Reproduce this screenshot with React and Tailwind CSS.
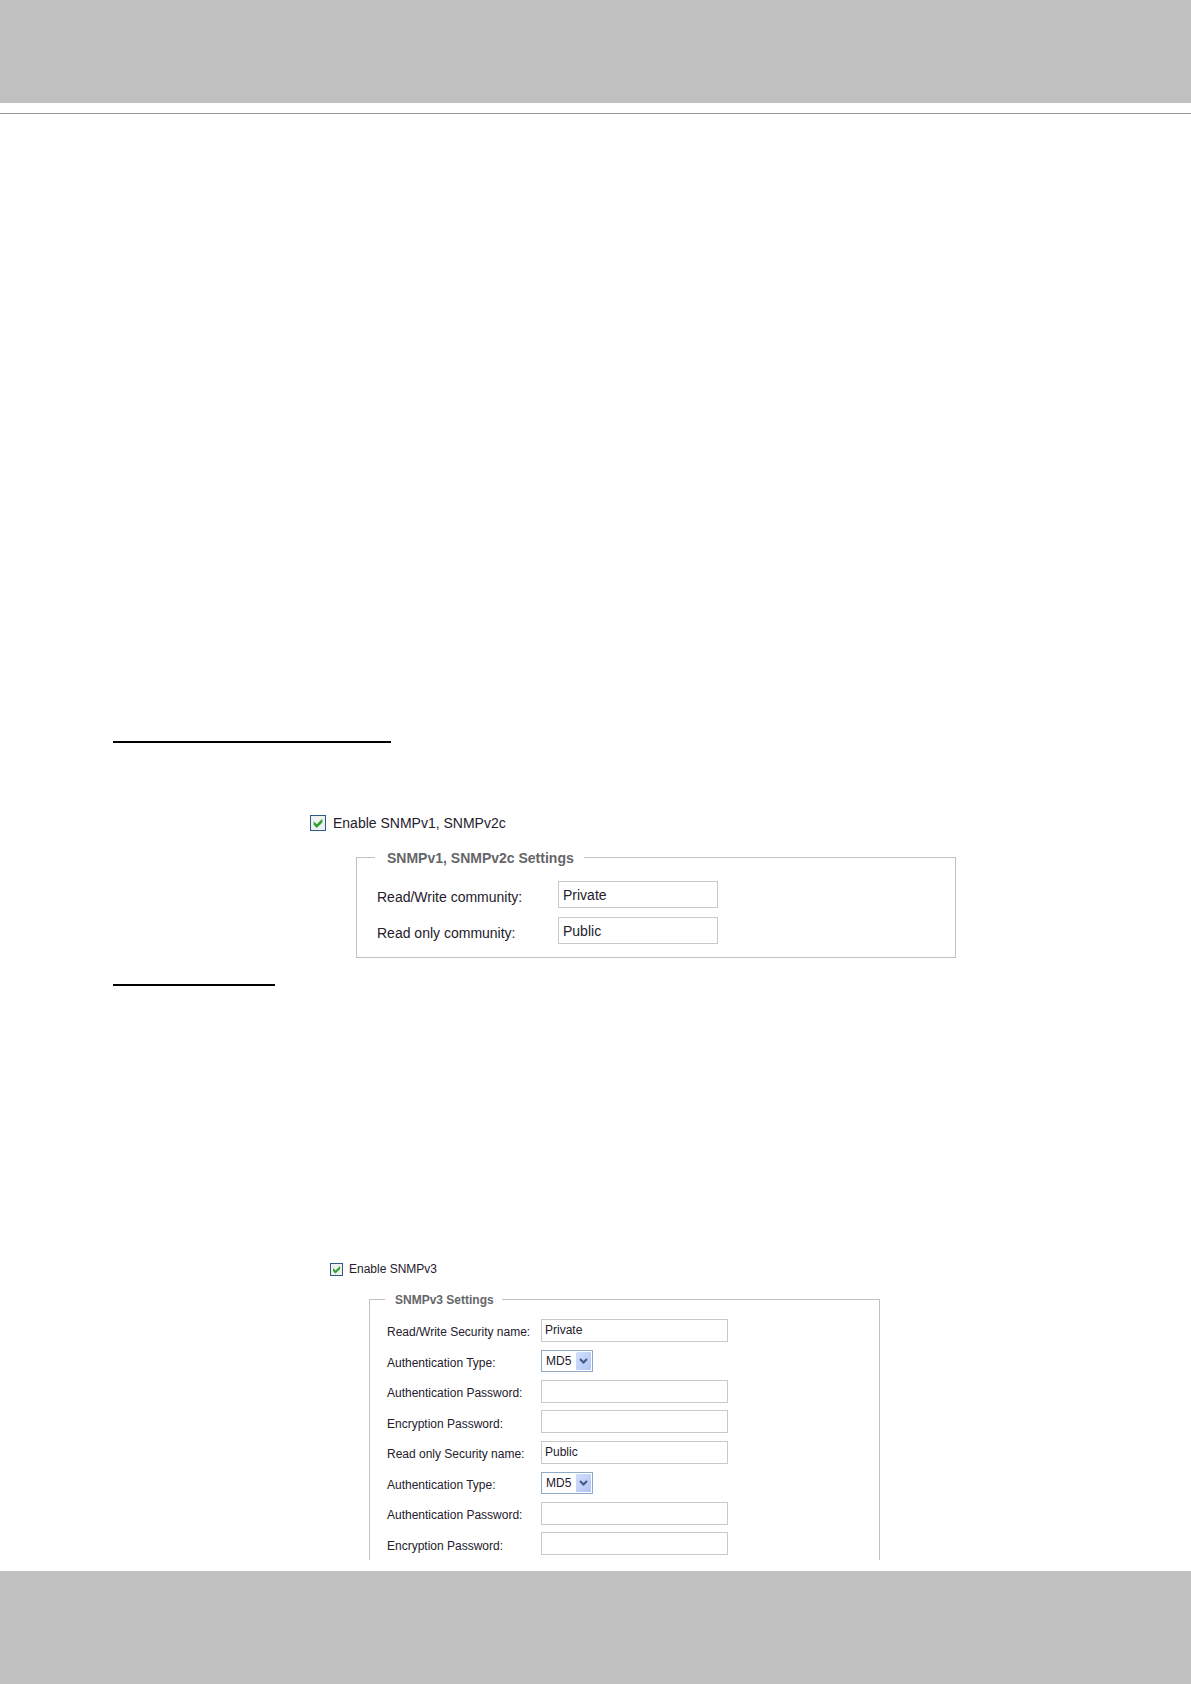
import React from "react";

function CheckBox({ id, className }) {
  return (
    <span className={"relative block shrink-0 " + className}>
      <input
        id={id}
        type="checkbox"
        defaultChecked
        className="peer block h-full w-full appearance-none border border-[#2c5a8c] bg-[#f0f1ee]"
      />
      <svg
        viewBox="0 0 13 13"
        className="pointer-events-none absolute inset-0 hidden h-full w-full peer-checked:block"
        aria-hidden="true"
      >
        <path d="M3 5v3l2.5 2.5L10 6V3L5.5 7.5z" fill="#2da12d" />
      </svg>
    </span>
  );
}

function TypeSelect({ id }) {
  return (
    <span className="relative block h-[22px] w-[52px]">
      <select
        id={id}
        className="block h-full w-full appearance-none border border-[#8fabc6] bg-white pl-1 text-[12px] leading-5 text-[#24202c]"
      >
        <option>MD5</option>
        <option>SHA</option>
      </select>
      <svg
        viewBox="0 0 15 18"
        className="pointer-events-none absolute top-[2px] right-[2px] h-[18px] w-[15px]"
        aria-hidden="true"
      >
        <defs>
          <linearGradient id={id + "-fill"} x1="0" y1="0" x2="1" y2="1">
            <stop offset="0" stopColor="#d3defc" />
            <stop offset="1" stopColor="#b0c5f7" />
          </linearGradient>
        </defs>
        <rect width="15" height="18" rx="1" fill={"url(#" + id + "-fill)"} />
        <path d="M4 7l3.5 3.5L11 7" fill="none" stroke="#465a86" strokeWidth="2.2" />
      </svg>
    </span>
  );
}

const communities = [
  { id: "rw-community", label: "Read/Write community:", value: "Private" },
  { id: "ro-community", label: "Read only community:", value: "Public" },
];

const v3Fields = [
  { id: "rw-name", label: "Read/Write Security name:", type: "text", value: "Private" },
  { id: "rw-auth", label: "Authentication Type:", type: "select" },
  { id: "rw-auth-pass", label: "Authentication Password:", type: "password" },
  { id: "rw-enc-pass", label: "Encryption Password:", type: "password" },
  { id: "ro-name", label: "Read only Security name:", type: "text", value: "Public" },
  { id: "ro-auth", label: "Authentication Type:", type: "select" },
  { id: "ro-auth-pass", label: "Authentication Password:", type: "password" },
  { id: "ro-enc-pass", label: "Encryption Password:", type: "password" },
];

export default function App() {
  return (
    <div className="flex min-h-screen flex-col bg-white font-['Liberation_Sans',Arial,sans-serif] text-[#24202c]">
      <header>
        <div className="h-[103px] bg-[#c0c0c0]" />
        <div className="mt-[10px] border-t border-[#969696]" />
      </header>

      <main className="flex-1 px-[113px] pt-[627px] pb-[11px]">
        <hr className="w-[278px] border-0 border-t-2 border-black" />

        <section className="mt-[70px] ml-[197px] max-w-[646px] text-[14px] leading-5">
          <div className="flex items-center gap-[7px]">
            <CheckBox id="enable-v1" className="h-4 w-4" />
            <label htmlFor="enable-v1">Enable SNMPv1, SNMPv2c</label>
          </div>
          <fieldset className="mt-[13px] ml-[46px] border border-[#c1c1bf] pb-[13px] pl-5">
            <legend className="-ml-[2px] pt-[2px] pr-[10px] pl-3 font-bold text-[#66666a]">SNMPv1, SNMPv2c Settings</legend>
            <div className="mt-[13px] flex flex-col gap-[9px]">
              {communities.map((f) => (
                <div key={f.id} className="flex items-center">
                  <label htmlFor={f.id} className="w-[181px] pt-1">{f.label}</label>
                  <input
                    id={f.id}
                    type="text"
                    defaultValue={f.value}
                    className="h-[27px] w-[160px] border border-[#c6cacf] bg-white px-1"
                  />
                </div>
              ))}
            </div>
          </fieldset>
        </section>

        <hr className="mt-[26px] w-[162px] border-0 border-t-2 border-black" />

        <section className="mt-[275px] ml-[217px] max-w-[550px] text-[12px] leading-4">
          <div className="flex items-center gap-[6px]">
            <CheckBox id="enable-v3" className="h-[13px] w-[13px]" />
            <label htmlFor="enable-v3">Enable SNMPv3</label>
          </div>
          <fieldset className="mt-[13px] ml-[39px] border border-b-0 border-[#c1c1bf] pb-[1px] pl-[17px]">
            <legend className="-ml-[2px] pt-[2px] pr-2 pl-[10px] font-bold text-[#66666a]">SNMPv3 Settings</legend>
            <div className="mt-[7px] grid grid-rows-[30px_31px_30px_31px_30px_31px_30px_31px]">
              {v3Fields.map((f) => (
                <div key={f.id} className="flex items-center">
                  <label htmlFor={f.id} className="w-[154px] pt-1">{f.label}</label>
                  {f.type === "select" ? (
                    <TypeSelect id={f.id} />
                  ) : (
                    <input
                      id={f.id}
                      type={f.type}
                      defaultValue={f.value}
                      className="h-[23px] w-[187px] border border-[#c6cacf] bg-white px-[3px]"
                    />
                  )}
                </div>
              ))}
            </div>
          </fieldset>
        </section>
      </main>

      <footer className="h-[113px] bg-[#c0c0c0]" />
    </div>
  );
}
